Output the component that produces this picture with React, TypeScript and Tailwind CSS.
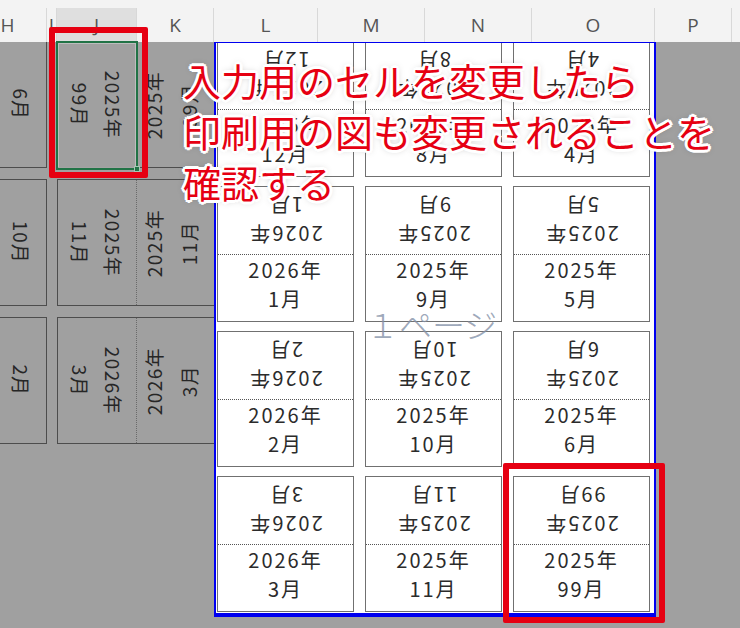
import React from "react";

const FONT = "font-['Noto_Sans_CJK_JP','Noto_Sans',sans-serif]";

function HCol({ label, className, active }: { label: string; className: string; active?: boolean }) {
  return (
    <div
      className={
        "flex-none h-full flex items-center justify-center border-r border-[#d8d8d8] text-[19px] text-[#555] font-['Open_Sans',sans-serif] " +
        (active ? "bg-[#dfdfdf] " : "") +
        className
      }
    >
      {label}
    </div>
  );
}

function LeftRow({ h, year, m }: { h: string; year: string; m: string }) {
  return (
    <div className="flex h-[127px] flex-none">
      <div className="-ml-[6px] w-[53px] flex-none border border-[#4d4d4d] flex items-center justify-center">
        <div className="rotate-90 whitespace-nowrap tracking-[1px]">{h}</div>
      </div>
      <div className="ml-[10px] w-[157px] flex-none flex border border-r-0 border-[#4d4d4d]">
        <div className="w-[79px] flex-none border-r border-dotted border-[#6a6a6a] flex items-center justify-center">
          <div className="rotate-90 whitespace-nowrap text-center leading-[33px] tracking-[1.5px]">
            <div>{year}</div>
            <div>{m}</div>
          </div>
        </div>
        <div className="flex-1 flex items-center justify-center pr-[10px]">
          <div className="-rotate-90 whitespace-nowrap text-center leading-[35px] tracking-[1.5px]">
            <div>{year}</div>
            <div>{m}</div>
          </div>
        </div>
      </div>
    </div>
  );
}

function Card({ year, m }: { year: string; m: string }) {
  return (
    <div className="border border-[#707070] flex flex-col text-[20px] tracking-[2px] text-[#2b2b2b] leading-[28.5px]">
      <div className="h-[67px] flex-none rotate-180 flex flex-col items-center pt-[6px]">
        <div>{year}</div>
        <div>{m}</div>
      </div>
      <div className="h-0 border-t border-dotted border-[#555]" />
      <div className="flex-1 flex flex-col items-center pt-px">
        <div>{year}</div>
        <div>{m}</div>
      </div>
    </div>
  );
}

const cards: [string, string][] = [
  ["2025年", "12月"], ["2025年", "8月"], ["2025年", "4月"],
  ["2026年", "1月"], ["2025年", "9月"], ["2025年", "5月"],
  ["2026年", "2月"], ["2025年", "10月"], ["2025年", "6月"],
  ["2026年", "3月"], ["2025年", "11月"], ["2025年", "99月"],
];

export default function App() {
  return (
    <div className={"relative w-[740px] h-[628px] overflow-hidden bg-[#a0a0a0] " + FONT}>
      {/* column header */}
      <div className="h-[42px] bg-[#f3f3f3] pt-2 flex overflow-hidden">
        <HCol label="H" className="w-[78px] -ml-[31px]" />
        <HCol label="I" className="w-[10px]" />
        <HCol label="J" className="w-[80px]" active />
        <HCol label="K" className="w-[77px]" />
        <HCol label="L" className="w-[104px]" />
        <HCol label="M" className="w-[107px]" />
        <HCol label="N" className="w-[107px]" />
        <HCol label="O" className="w-[123px]" />
        <HCol label="P" className="w-[77px]" />
        <HCol label="" className="w-[80px]" />
      </div>

      {/* sheet body */}
      <div className="flex h-[586px] overflow-hidden">
        <div className="w-[214px] flex-none flex flex-col gap-[11px] -mt-px text-[19px] text-[#262626]">
          <LeftRow h="6月" year="2025年" m="99月" />
          <LeftRow h="10月" year="2025年" m="11月" />
          <LeftRow h="2月" year="2026年" m="3月" />
        </div>

        <div className="w-[442px] h-[575px] flex-none bg-white border-x-2 border-b-[3px] border-t border-[#0000f0] overflow-hidden flex flex-col">
          <div className="-mt-[2px] pl-px grid grid-cols-[137px_137px_137px] auto-rows-[136px] gap-x-[11px] gap-y-[9px]">
            {cards.map(([y, m], i) => (
              <Card key={i} year={y} m={m} />
            ))}
          </div>
          <div className="mt-px h-[1.5px] bg-[#0000f0]" />
        </div>

        <div className="flex-1" />
      </div>

      {/* page watermark */}
      <div className="absolute left-[366px] top-[308px] text-[33px] leading-[33px] font-light text-[#8592a8]/80 whitespace-nowrap">
        １ページ
      </div>

      {/* selected cell */}
      <div className="absolute left-[56px] top-[41px] w-[82px] h-[129px] border-2 border-[#217346]">
        <div className="absolute inset-0 border border-[#c9c9c9]/70" />
        <div className="absolute -right-[4px] -bottom-[4px] w-[6px] h-[6px] bg-[#217346] border border-white/60" />
      </div>

      {/* red highlight boxes */}
      <div className="absolute left-[49px] top-[27px] w-[99px] h-[151px] border-[6px] border-[#e60012] rounded-[2px]" />
      <div className="absolute left-[503px] top-[463px] w-[162px] h-[160px] border-[6px] border-[#e60012] rounded-[2px]" />

      {/* annotation */}
      <div className="absolute left-[183px] top-[54px] text-[38px] leading-[51px] font-normal text-[#e60012] whitespace-nowrap [text-shadow:3px_0_0_#fff,-3px_0_0_#fff,0_3px_0_#fff,0_-3px_0_#fff,2px_2px_0_#fff,-2px_2px_0_#fff,2px_-2px_0_#fff,-2px_-2px_0_#fff,0_0_7px_rgba(0,0,0,0.35)]">
        <div>入力用のセルを変更したら</div>
        <div>印刷用の図も変更されることを</div>
        <div>確認する</div>
      </div>
    </div>
  );
}
